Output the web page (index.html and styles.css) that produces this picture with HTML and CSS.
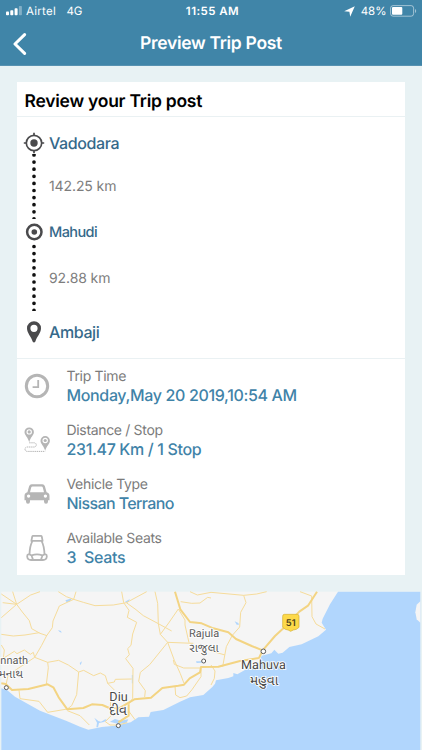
FILE: index.html
```html
<!DOCTYPE html>
<html lang="en">
<head>
    <meta charset="UTF-8">
    <meta name="viewport" content="width=device-width, initial-scale=1.0">
    <title>Preview Trip Post</title>
    <link rel="stylesheet" href="styles.css">
</head>
<body>
    <header>
        <div class="status-bar">
            <div class="status-left">
                <svg class="signal" width="17" height="10" viewBox="0 0 17 10" fill="#fff">
                    <rect x="0" y="5.5" width="3" height="3.7" rx="0.8"/>
                    <rect x="4.3" y="4.2" width="3" height="5" rx="0.8"/>
                    <rect x="8.6" y="2.3" width="3" height="6.9" rx="0.8"/>
                    <rect x="12.9" y="0" width="3" height="9.2" rx="0.8" opacity="0.35"/>
                </svg>
                <span class="carrier">Airtel</span>
                <span class="network">4G</span>
            </div>
            <span class="clock">11:55 AM</span>
            <div class="status-right">
                <svg class="location" width="11" height="11" viewBox="0 0 11 11"><path d="M10.8 0.2L6.2 10.8L5.4 5.8L0.2 5.2Z" fill="#fff"/></svg>
                <span class="percent">48%</span>
                <svg width="27" height="12" viewBox="0 0 27 12">
                    <rect x="0.6" y="0.6" width="23" height="10.6" rx="2.5" fill="none" stroke="#fff" stroke-opacity="0.5"/>
                    <rect x="2" y="2" width="10.3" height="7.8" rx="1" fill="#fff"/>
                    <path d="M25 4V8C26.6 7.2 26.6 4.8 25 4Z" fill="#fff" opacity="0.5"/>
                </svg>
            </div>
        </div>
        <div class="nav-bar">
            <svg class="back" width="14" height="22" viewBox="0 0 14 22"><path d="M11.6 1.6L2 11L11.6 20.4" fill="none" stroke="#fff" stroke-width="3" stroke-linecap="round" stroke-linejoin="round"/></svg>
            <h1>Preview Trip Post</h1>
        </div>
    </header>

    <main class="card">
        <h2>Review your Trip post</h2>

        <section class="route">
            <div class="stop">
                <svg width="22" height="22" viewBox="0 0 22 22" fill="none" stroke="#4a4a4c">
                    <circle cx="11" cy="11" r="7.7" stroke-width="1.7"/>
                    <path d="M11 0.8V4M11 18V21.2M0.8 11H4M18 11H21.2" stroke-width="1.7"/>
                    <circle cx="11" cy="11" r="3.7" fill="#4a4a4c" stroke="none"/>
                </svg>
                <span class="place start">Vadodara</span>
            </div>
            <div class="leg first">
                <svg width="22" height="65" viewBox="0 0 22 65"><path d="M11 1V70" stroke="#111" stroke-width="3.7" stroke-linecap="round" stroke-dasharray="0 7.1"/></svg>
                <span class="km">142.25 km</span>
            </div>
            <div class="stop middle">
                <svg width="22" height="22" viewBox="0 0 22 22" fill="none" stroke="#4a4a4c">
                    <circle cx="11.3" cy="11" r="7.2" stroke-width="2.5"/>
                    <circle cx="11.3" cy="11" r="2.8" fill="#4a4a4c" stroke="none"/>
                </svg>
                <span class="place mid">Mahudi</span>
            </div>
            <div class="leg second">
                <svg width="22" height="68" viewBox="0 0 22 68"><path d="M11 3.5V72" stroke="#111" stroke-width="3.7" stroke-linecap="round" stroke-dasharray="0 7.1"/></svg>
                <span class="km">92.88 km</span>
            </div>
            <div class="stop last">
                <svg width="22" height="22" viewBox="0 0 22 22"><path fill="#4a4a4c" fill-rule="evenodd" d="M11 0.2A7 7 0 0 0 4 7.2C4 12.3 8.3 15.4 9.6 20.4Q11 22.6 12.4 20.4C13.7 15.4 18 12.3 18 7.2A7 7 0 0 0 11 0.2ZM11 3.7A3.6 3.6 0 1 1 11 10.9A3.6 3.6 0 1 1 11 3.7Z"/></svg>
                <span class="place end">Ambaji</span>
            </div>
        </section>

        <section class="details">
            <div class="detail">
                <svg width="26" height="26" viewBox="0 0 26 26" fill="none" stroke="#b5b5b5">
                    <circle cx="13" cy="13" r="10.7" stroke-width="3"/>
                    <path d="M14.2 7V14.2H8.6" stroke-width="1.8"/>
                </svg>
                <div class="info">
                    <span class="label">Trip Time</span>
                    <span class="value time">Monday,May 20 2019,10:54 AM</span>
                </div>
            </div>
            <div class="detail">
                <svg width="26" height="26" viewBox="0 0 26 26">
                    <g fill="#b5b5b5" fill-rule="evenodd">
                        <path id="pin" d="M5.2 0.4A4.7 4.7 0 0 0 0.5 5.1C0.5 8.4 4 10.3 5.2 15.2C6.4 10.3 9.9 8.4 9.9 5.1A4.7 4.7 0 0 0 5.2 0.4ZM5.2 2.2A2.7 2.7 0 1 1 5.2 7.6A2.7 2.7 0 1 1 5.2 2.2Z"/>
                        <use href="#pin" x="16" y="8.6"/>
                        <circle cx="5.2" cy="4.9" r="1.6"/>
                        <circle cx="21.2" cy="13.5" r="1.6"/>
                    </g>
                    <path d="M5.2 15.8H10.2A2.1 2.1 0 0 1 10.2 20H3.2A2.2 2.2 0 0 0 3.2 24.4H21.2" fill="none" stroke="#b5b5b5" stroke-width="1" stroke-dasharray="1.4 0.7"/>
                </svg>
                <div class="info">
                    <span class="label">Distance / Stop</span>
                    <span class="value distance">231.47 Km / 1 Stop</span>
                </div>
            </div>
            <div class="detail">
                <svg width="26" height="26" viewBox="0 0 26 26">
                    <path fill="#b5b5b5" fill-rule="evenodd" d="M7.7 3.2H18.3Q20.3 3.2 20.9 5.2L22.6 11.3Q25.5 12 25.5 15V19.2H24V20.5Q24 22.8 22 22.8Q20 22.8 20 20.5V19.2H6V20.5Q6 22.8 4 22.8Q2 22.8 2 20.5V19.2H0.5V15Q0.5 12 3.4 11.3L5.1 5.2Q5.7 3.2 7.7 3.2ZM8.5 5.5Q7.5 5.5 7.2 6.5L6 11.2H20L18.8 6.5Q18.5 5.5 17.5 5.5ZM4.6 13.4A1.7 1.7 0 1 0 4.6 16.8A1.7 1.7 0 1 0 4.6 13.4ZM21.4 13.4A1.7 1.7 0 1 0 21.4 16.8A1.7 1.7 0 1 0 21.4 13.4Z"/>
                </svg>
                <div class="info">
                    <span class="label">Vehicle Type</span>
                    <span class="value vehicle">Nissan Terrano</span>
                </div>
            </div>
            <div class="detail">
                <svg width="26" height="26" viewBox="0 0 26 26" fill="none" stroke="#b5b5b5" stroke-width="1.8" stroke-linejoin="round">
                    <path d="M7.4 5.9L8.2 1.7Q8.4 0.9 9.2 0.9H16.8Q17.6 0.9 17.8 1.7L18.6 5.9ZM8.5 5.9C6.2 10 5.6 15 5.5 20M17.5 5.9C19.8 10 20.4 15 20.5 20M7.6 20.4Q13 18.4 18.4 20.4M7.6 20.4C5 18.6 3 19.2 3.2 21.5C3.4 24 4.5 25 7 25H19C21.5 25 22.6 24 22.8 21.5C23 19.2 21 18.6 18.4 20.4M7.6 20.4L9 24.8M18.4 20.4L17 24.8"/>
                </svg>
                <div class="info">
                    <span class="label">Available Seats</span>
                    <span class="value seats">3&nbsp; Seats</span>
                </div>
            </div>
        </section>
    </main>

    <!-- Route map: drawn at 3 units per pixel -->
    <svg class="map" width="422" height="159" viewBox="0 3 1266 477">
        <rect x="4" y="5" width="1257" height="475" fill="#f5f5f5"/>
        <g fill="#b1d6fd">
            <path d="M4 295L22 301L45 320L120 362L200 393L240 410L265 419L305 411L345 407L392 397L415 382L447 380L452 366L490 360L540 335L570 322L610 315L637 291L645 281L648 271L685 264L700 259L700 249L712 253L740 237L773 224L780 210L785 197L814 190L823 179L835 191L848 188L868 171L905 163L955 139L978 119L965 98L968 86L990 43L1014 5H1261V480H4Z"/>
            <path d="M283 383L291 398L289 412H294L297 399L312 396L321 390L316 388L303 395L295 393Z"/>
            <path d="M330 395L345 387L362 392L385 388L380 398L355 402Z"/>
            <path d="M196 31L216 25L210 34L200 37ZM375 35L390 27L383 38ZM174 120L183 123L185 128L179 126ZM239 219L246 214L242 226ZM704 94L715 99L717 104L710 104ZM588 214L604 214L606 218L590 219Z"/>
            <path d="M397 255V280" fill="none" stroke="#b1d6fd" stroke-width="3"/>
        </g>
        <path d="M1261 34L1250 44L1246 67L1250 88L1261 98Z" fill="#f5f5f5"/>
        <g class="roads">
            <path d="M4 12L50 43L92 15L120 5M8 38L50 43L38 5M4 83L50 43L67 66L88 92L95 116L120 130L141 137M4 133L40 138L75 135L118 128M228 5L221 28L178 48L159 93L157 113L140 137L125 166L104 202L143 217L176 211L205 225L236 246L251 241L281 257L301 249L316 257L323 280L343 300M175 5L199 20L221 28L250 37L285 47L340 45L379 38L440 5"/>
            <path d="M365 5L371 38L387 61L382 82L410 97L398 132L393 166L383 176L388 194L377 206L399 235L398 325L386 343M379 38L408 59L430 77L475 101L515 123M465 5L473 40L475 101L481 133L503 157L580 160M481 133L506 99L535 57M503 157L449 224L421 247L416 274L436 302L434 321M503 157L523 211L541 251L552 280M520 210L523 223L551 234H604"/>
            <path d="M570 5L592 15L633 7L731 16L770 12L800 5M731 16L738 38L722 67L719 111L697 136L679 170L668 230M535 57L555 90L555 105L567 158M542 35L575 40L600 39L623 22L633 24M900 5L935 18L936 80L948 102L975 117"/>
            <path d="M4 165L13 180L10 205L43 184L51 191L73 180L91 193L100 187L104 202L50 238L24 256L17 290M143 217L145 233L139 283M236 246L230 314L215 347L202 357L143 367L117 334L60 326L57 301M202 362L240 377L268 405M323 280L343 276L346 268L395 267M332 335L330 365L340 370L316 395L330 405L354 405L382 398M386 363L405 389M525 289L527 315L540 323L560 318L576 299L603 260V238M633 183L675 195M633 225L645 243L643 265L633 285"/>
        </g>
        <g class="highways">
            <path d="M4 280L17 282L36 300L85 297L143 283L160 292L176 322L202 358L250 354L276 343L307 345L328 354L357 355L403 328L453 323L487 294L535 287L552 284L569 265L600 247L603 231L655 230L720 213L777 204L788 181"/>
            <path d="M525 5L541 58L570 96L605 100L640 115L685 127L708 147L755 168L788 181L825 138L855 110L898 65L924 47L951 5M386 343V377L355 397"/>
        </g>
        <g class="towns">
            <circle cx="19" cy="293" r="6"/>
            <circle cx="611" cy="213" r="6"/>
            <circle cx="355" cy="407" r="6"/>
            <circle cx="790" cy="184" r="7"/>
        </g>
        <path d="M853 73H892Q897 73 897 79V112L889 118Q879 119 872 124Q865 119 856 118L848 112V79Q848 73 853 73Z" fill="#fdd949" stroke="#d3ad2e" stroke-width="2"/>
        <text class="shield" x="872" y="108">51</text>
        <g class="town-name">
            <text x="1" y="222">nnath</text>
            <text class="gujarati" x="-4" y="265">મનાથ</text>
            <text x="567" y="140">Rajula</text>
            <text class="gujarati" x="568" y="187">રાજુલા</text>
        </g>
        <g class="town-name large">
            <text x="328" y="332">Diu</text>
            <text class="gujarati" x="327" y="376">દીવ</text>
            <text x="723" y="237">Mahuva</text>
            <text class="gujarati" x="750" y="286">મહુવા</text>
        </g>
    </svg>
</body>
</html>
```

FILE: styles.css
```css
* {
    box-sizing: border-box;
}

body {
    margin: 0;
    height: 750px;
    overflow: hidden;
    background-color: #e8f2f4;
    font-family: Inter, "Liberation Sans", sans-serif;
    text-rendering: geometricPrecision;
}

svg {
    display: block;
    flex-shrink: 0;
}

header {
    height: 66px;
    background-color: #4085a8;
    border-bottom: 1px solid #5792b1;
    color: white;
}

.status-bar {
    height: 22px;
    padding: 0 5px 0 6px;
    display: grid;
    grid-template-columns: 1fr auto 1fr;
    align-items: center;
    font-size: 11.5px;
}

.status-left,
.status-right {
    display: flex;
    align-items: center;
}

.status-right {
    justify-content: flex-end;
}

.carrier {
    margin-left: 3px;
    letter-spacing: 0.25px;
}

.network {
    margin-left: 10.5px;
}

.clock {
    padding-left: 2px;
    font-weight: 600;
    font-size: 11.5px;
    letter-spacing: 0.45px;
}

.location {
    margin-right: 6px;
}

.percent {
    margin-right: 3.5px;
}

.nav-bar {
    height: 43px;
    padding-left: 13px;
    display: grid;
    grid-template-columns: 14px 1fr 27px;
    align-items: center;
}

.nav-bar h1 {
    margin: 0;
    text-align: center;
    font-size: 17.5px;
    font-weight: 600;
    letter-spacing: -0.3px;
}

.card {
    width: 388.5px;
    height: 493px;
    margin: 16px 0 16px 16.5px;
    background-color: white;
}

.card h2 {
    height: 35px;
    margin: 0;
    padding-left: 8px;
    border-bottom: 1px solid #eaf1f3;
    font-size: 17.5px;
    line-height: 39px;
    font-weight: 600;
    letter-spacing: -0.25px;
    color: #000;
}

.route {
    height: 242px;
    padding: 15px 0 0 6.5px;
    border-bottom: 1px solid #eaf1f3;
}

.stop,
.leg {
    display: flex;
    align-items: flex-start;
    gap: 4px;
}

.stop {
    height: 22px;
    align-items: center;
}

.place {
    font-size: 16px;
    font-weight: 450;
    letter-spacing: -0.4px;
    color: #35698a;
}

.place.mid {
    font-size: 14.5px;
    letter-spacing: -0.6px;
}

.km {
    padding-top: 24px;
    font-size: 14px;
    line-height: 17px;
    letter-spacing: -0.1px;
    color: #7d7d7d;
}

.leg.first {
    height: 67px;
}

.leg.second {
    height: 71px;
}

.leg.second .km {
    padding-top: 27px;
}

.stop.last {
    margin-top: 7px;
}

.detail {
    height: 54px;
    padding-left: 7.5px;
    display: flex;
    align-items: center;
    gap: 16.5px;
}

.info {
    display: flex;
    flex-direction: column;
}

.label {
    padding-top: 1px;
    font-size: 14px;
    line-height: 18px;
    letter-spacing: -0.33px;
    color: #7b7b7b;
}

.value {
    font-size: 16px;
    font-weight: 450;
    line-height: 19px;
    letter-spacing: -0.35px;
    color: #3f83a8;
}

.value.vehicle {
    letter-spacing: -0.6px;
}

.roads,
.highways {
    fill: none;
    stroke: #f5dc9b;
    stroke-width: 3;
    stroke-linejoin: round;
}

.highways {
    stroke: #f3d483;
    stroke-width: 6;
}

.towns {
    fill: #fff;
    stroke: #5b5b5b;
    stroke-width: 3;
}

.shield {
    font-size: 28px;
    font-weight: 600;
    text-anchor: middle;
    fill: #4b421c;
}

.town-name {
    font-family: Roboto, "Noto Sans Gujarati", "Noto Sans", sans-serif;
    font-size: 33px;
    fill: #5c5c5c;
    stroke: #fff;
    stroke-width: 5;
    paint-order: stroke;
}

.town-name.large {
    font-size: 38px;
    fill: #484848;
}

.town-name .gujarati {
    font-size: 36px;
}

.town-name.large .gujarati {
    font-size: 41px;
}
```
